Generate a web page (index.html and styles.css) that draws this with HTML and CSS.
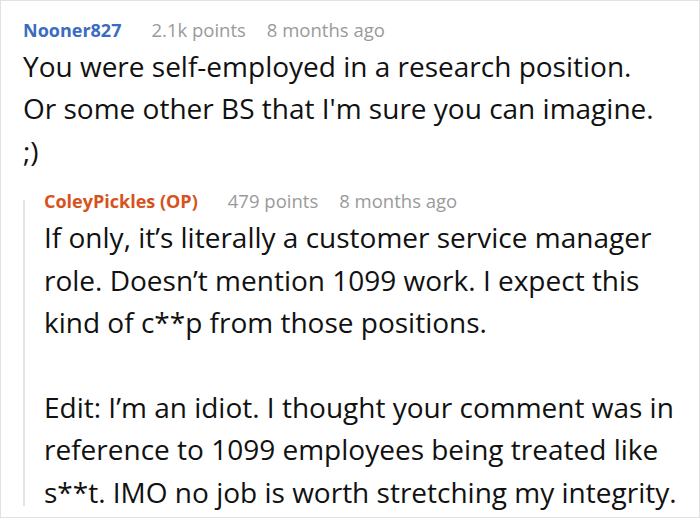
FILE: index.html
```html
<!DOCTYPE html>
<html lang="en">
<head>
<meta charset="utf-8">
<title>Comments</title>
<link rel="stylesheet" href="styles.css">
</head>
<body>
<div class="frame">
  <div class="comment">
    <div class="meta">
      <span class="user user-blue">Nooner827</span>
      <span class="points">2.1k points</span>
      <span class="time">8 months ago</span>
    </div>
    <div class="text">
      <p>You were self-employed in a research position.<br>Or some other BS that I'm sure you can imagine.<br>;)</p>
    </div>
  </div>
  <div class="reply">
    <div class="meta">
      <span class="user user-op">ColeyPickles (OP)</span>
      <span class="points">479 points</span>
      <span class="time">8 months ago</span>
    </div>
    <div class="text">
      <p>If only, it’s literally a customer service manager<br>role. Doesn’t mention 1099 work. I expect this<br>kind of c**p from those positions.</p>
      <p>Edit: I’m an idiot. I thought your comment was in<br>reference to 1099 employees being treated like<br>s**t. IMO no job is worth stretching my integrity.</p>
    </div>
  </div>
</div>
</body>
</html>
```

FILE: styles.css
```css
html, body {
  margin: 0;
  padding: 0;
  background: #ffffff;
}

body {
  font-family: "Open Sans", "Noto Sans", sans-serif;
  color: #111111;
}

.frame {
  box-sizing: border-box;
  width: 700px;
  height: 518px;
  border: 1px solid #e2e2e2;
  padding: 17px 0 0 22px;
  overflow: hidden;
}

.meta {
  display: flex;
  align-items: baseline;
  font-size: 18.5px;
  line-height: 24px;
  white-space: nowrap;
}

.user {
  font-size: 18px;
  font-weight: 700;
  margin-right: 30px;
}

.user-blue {
  color: #3b6cbf;
}

.user-op {
  color: #d6531d;
}

.points,
.time {
  color: #9a9a9a;
}

.points {
  margin-right: 21px;
}

.text {
  margin-top: 3px;
  font-size: 28px;
  line-height: 42.4px;
  white-space: nowrap;
}

.text p {
  margin: 0;
}

.text p + p {
  margin-top: 42.4px;
}

.reply {
  position: relative;
  margin-top: 17px;
  padding-left: 21px;
}

.reply::before {
  content: "";
  position: absolute;
  left: 0;
  top: 11px;
  bottom: 7px;
  width: 2px;
  background: #e4e4e4;
}
```
